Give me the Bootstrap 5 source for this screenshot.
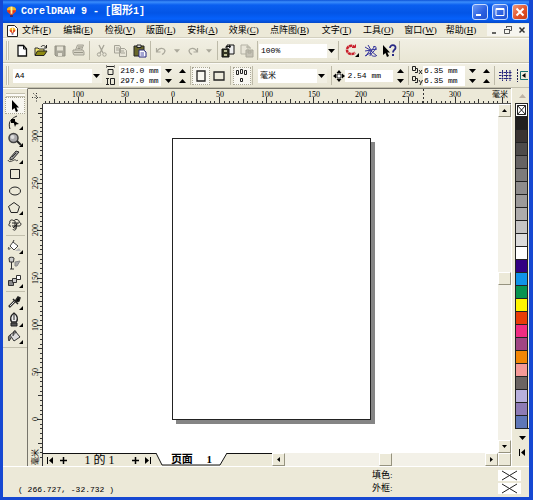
<!DOCTYPE html>
<html lang="zh-CN">
<head>
<meta charset="utf-8">
<meta name="viewport" content="width=device-width, initial-scale=1">
<title>CorelDRAW 9 - [图形1]</title>
<link href="https://cdn.jsdelivr.net/npm/bootstrap@5.3.0/dist/css/bootstrap.min.css" rel="stylesheet">
<style>
:root{--face:#ece9d8;--dark:#8d8b7d;--line:#c3c0ae;--blue:#0b4ee2}
body{font-family:"Liberation Mono","Noto Sans CJK SC",monospace;font-size:8px;line-height:12px;color:#000;background:var(--face)}
button{background:none;border:0;padding:0;color:#000;line-height:12px}
svg{display:block;flex:none}
.app{height:100vh;border:solid #1648d2;border-width:0 4px 3px 3px;background:var(--face)}
.titlebar{height:23px;margin:0 -4px 0 -3px;padding:0 5px 0 6px;color:#fff;background:linear-gradient(#0d53d8,#3b8dfb 2px,#0a5ff0 5px,#0355e6 13px,#0661fb 19px,#0448c8)}
.titlebar h1{font-size:10px;line-height:16px;font-weight:bold;margin:0 0 0 4px;white-space:pre}
.titlebar .cjk{font-size:11px}
.winbtn{width:16px;height:16px;border:1px solid #c8dcff;border-radius:3px;background:linear-gradient(135deg,#6d9bf5,#2a5fe0 60%,#2352cf)}
.winclose{background:linear-gradient(135deg,#f09a7c,#e2532a 55%,#c93c12)}
.menubar{height:15px;border-bottom:1px solid #d3d0bf}
.menus{display:grid;grid-template-columns:repeat(6,4fr) 5fr repeat(4,4fr)}
.menus a{color:#000;text-decoration:none;font:9px/15px "Liberation Serif","Noto Sans CJK SC",serif;white-space:nowrap}
.mdi{width:14px;height:12px;background:#f6f5ef}
.tbar{height:25px;border-top:1px solid #fbfaf5;border-bottom:1px solid var(--line);background:linear-gradient(#f1efe3,#e9e6d4)}
.grip{width:3px;height:19px;border:solid var(--line);border-width:0 1px;margin:0 4px 0 3px;background:#fbfaf5}
.vsep{width:1px;height:19px;background:#bdbaa8;margin:0 1px}
.gap2{margin:0 2px}
.ib{width:18px;height:18px;display:flex;align-items:center;justify-content:center;flex:none}
.wide{width:19px}
.mini{width:14px}
.pressed{background:#f8f7f1;border:1px dotted #aaa795}
.field{border:0;padding:0 2px;background:#fff;font:8px/12px "Liberation Mono","Noto Sans CJK SC",monospace;color:#000;height:12px;border-radius:0;display:block;min-width:0}
.field.tight{height:10px;line-height:10px;width:42px;padding:0 0 0 1px}
.combo{position:relative;display:block}
.combo select{appearance:none;width:100%;padding-right:14px}
.combo svg{position:absolute;right:2px;top:5px;pointer-events:none}
.combo select.field{height:14px;line-height:14px;background:linear-gradient(to left,#f1efe3 10px,#fff 10px)}
.rowh{height:10px}
.toolbox{width:25px;border-right:1px solid #77756b;border-top:1px solid #fff}
.toolbox button{width:20px;height:17px;display:flex;align-items:center;justify-content:center}
.hgrip{height:4px;width:19px;border:solid var(--line);border-width:1px 0;background:#fbfaf5}
.hsep{height:1px;width:19px;background:var(--line);margin:2px 0}
.work{border-top:1px solid #77756b}
.hruler{height:15px}
.vruler{width:15px}
.rulerlabel{font:8px "Liberation Serif","Noto Sans CJK SC",serif}
.paper{position:absolute;left:129px;top:34px;width:199px;height:282px;background:#fff;border:1px solid #222;box-shadow:4px 4px 0 #858585}
.sb{background:#f3f1e8;flex:none}
.sbbtn{width:13px;height:13px;flex:none;display:flex;align-items:center;justify-content:center;background:var(--face);border:1px solid;border-color:#fff #96937f #96937f #fff}
.vs{width:13px}
.hs{height:13px}
.pager{height:13px}
.pager .txt{font:12px/13px "Liberation Serif","Noto Sans CJK SC",serif;white-space:pre}
.edge{border-top:1px solid #111}
.tab{position:relative;width:71px;height:13px}
.tab svg{position:absolute;left:0;top:0}
.tab span{position:relative;font:bold 11px/12px "Liberation Serif","Noto Sans CJK SC",serif;white-space:pre}
.pal{width:18px;border-left:1px solid #fff;padding-left:3px}
.pal .sw{width:13px;height:13px;border:1px solid #222;border-bottom:0;display:block}
.status{height:31px;border-top:1px solid #fff}
.coords{padding:0 0 1px 15px}
.nosel{width:23px;height:11px;background:#fff}
.lab{font:9px/13px "Liberation Serif","Noto Sans CJK SC",serif}
</style>
<script src="https://cdn.jsdelivr.net/npm/bootstrap@5.3.0/dist/js/bootstrap.bundle.min.js"></script>
</head>
<body>
<svg width="0" height="0" class="position-absolute">
<symbol id="dn" viewBox="0 0 7 4"><path d="M0 0h7L3.500 4z"/></symbol>
<symbol id="up" viewBox="0 0 7 4"><path d="M0 4h7L3.500 0z"/></symbol>
<symbol id="lt" viewBox="0 0 4 7"><path d="M4 0v7L0 3.500z"/></symbol>
<symbol id="rt" viewBox="0 0 4 7"><path d="M0 0v7l4-3.500z"/></symbol>
<symbol id="balloon" viewBox="0 0 12 13"><path d="M1 4.500C1 0 11 0 11 4.500 11 7 8 8.500 7 10H5C4 8.500 1 7 1 4.500z" fill="#f4b21b"/><path d="M1 5h10C11 7.500 8 8 7 10H5C4 8 1 7.500 1 5z" fill="#df3320"/><path d="M5 1.300h2L7 9H5z" fill="#fff2a0"/><path d="M4.500 10.500h3v2h-3z" fill="#45215b"/></symbol>
<symbol id="none" viewBox="0 0 23 11"><path d="M4 1l15 9M19 1L4 10" stroke="#222" fill="none"/></symbol>
<symbol id="cnr" viewBox="0 0 4 4"><path d="M4 0v4H0z"/></symbol>
</svg>
<div class="app d-flex flex-column overflow-hidden">
 <header class="titlebar d-flex align-items-center">
  <svg width="11" height="13"><use href="#balloon"/></svg>
  <h1>CorelDRAW 9 - [<span class="cjk">图形</span>1]</h1>
  <div class="ms-auto d-flex column-gap-1">
   <button class="winbtn" aria-label="最小化"><svg width="14" height="14"><path d="M3 9h5v2H3z" fill="#fff"/></svg></button>
   <button class="winbtn" aria-label="最大化"><svg width="14" height="14"><path d="M3 3.500h8v7H3zM3 4.500h8" fill="none" stroke="#fff"/></svg></button>
   <button class="winbtn winclose" aria-label="关闭"><svg width="14" height="14"><path d="M3.500 3.500l7 7m0-7l-7 7" stroke="#fff" stroke-width="2"/></svg></button>
  </div>
 </header>
 <nav class="menubar d-flex align-items-center ps-1">
  <svg width="11" height="13"><path d="M.5 1.500h7l3 3v8H.5z" fill="#fff" stroke="#222"/><use href="#balloon" x="2" y="3" width="7" height="8"/></svg>
  <div class="menus flex-grow-1 ps-1">
   <a href="#">文件(<u>F</u>)</a><a href="#">编辑(<u>E</u>)</a><a href="#">检视(<u>V</u>)</a><a href="#">版面(<u>L</u>)</a><a href="#">安排(<u>A</u>)</a><a href="#">效果(<u>C</u>)</a><a href="#">点阵图(<u>B</u>)</a><a href="#">文字(<u>T</u>)</a><a href="#">工具(<u>O</u>)</a><a href="#">窗口(<u>W</u>)</a><a href="#">帮助(<u>H</u>)</a>
  </div>
  <button class="mdi" aria-label="最小化文档"><svg width="14" height="12"><path d="M5 9h4" stroke="#333" stroke-width="1.500"/></svg></button>
  <button class="mdi" aria-label="还原文档"><svg width="14" height="12"><path d="M5.500 4V2.500h5v4H9M3.500 5.500h5v4h-5zM5 2.500h6M3 5.500h6" fill="none" stroke="#555"/></svg></button>
  <button class="mdi" aria-label="关闭文档"><svg width="14" height="12"><path d="M4.500 3.500l5 5m0-5l-5 5" stroke="#333" stroke-width="1.500"/></svg></button>
 </nav>

 <div class="tbar d-flex align-items-center" role="toolbar">
  <i class="grip"></i>
  <button class="ib" aria-label="新建"><svg width="12" height="13"><path d="M2 1.500h5.500L10.500 5v7H2z" fill="#fff" stroke="#111" stroke-width="1.300"/><path d="M7.500 1.500V5h3" fill="none" stroke="#111"/></svg></button>
  <button class="ib wide" aria-label="打开"><svg width="14" height="13"><path d="M1 11V4h3l1 1h5v2" fill="#f5e76b" stroke="#333"/><path d="M1 11.500L3.500 7H13l-3 4.500z" fill="#8e8a12" stroke="#222"/><path d="M7 3c1-2 4-2 5 .5M12.500 1v3H10" fill="none" stroke="#222"/></svg></button>
  <button class="ib wide" aria-label="保存"><svg width="12" height="12"><path d="M1 1h10v10H2L1 10z" fill="#aaa89b" stroke="#929083"/><path d="M3 1.500h6v4H3zM4 8h4v3H4z" fill="#e6e3d5"/></svg></button>
  <button class="ib" aria-label="打印"><svg width="13" height="13"><path d="M3.500 6l2-5h6l-2 5M1 6h10l1 2v3H2L1 9z" fill="#d8d5c7" stroke="#a3a194"/><path d="M2 8.500h9M6 3h4M5.500 4.500h3" stroke="#999789"/></svg></button>
  <i class="vsep gap2"></i>
  <button class="ib wide" aria-label="剪切"><svg width="12" height="13"><path d="M3 1l4 8m1-8L4 9" stroke="#a5a397" fill="none" stroke-width="1.300"/><circle cx="3" cy="10.500" r="1.700" fill="none" stroke="#a5a397"/><circle cx="8.500" cy="10.500" r="1.700" fill="none" stroke="#a5a397"/></svg></button>
  <button class="ib wide" aria-label="复制"><svg width="13" height="12"><path d="M.5.500h5l1 1.500v6h-6zM5.500 3.500h5l2 2v6h-7z" fill="#e8e5d8" stroke="#a5a397"/><path d="M2 3h3M2 5h3M7 6h3M7 8h4" stroke="#a5a397"/></svg></button>
  <button class="ib wide" aria-label="粘贴"><svg width="14" height="14"><path d="M1 2h10v10H1z" fill="#68662a" stroke="#222"/><path d="M4 1h4v2.500H4z" fill="#ddd" stroke="#222"/><path d="M6 6h4.500L13 8v5H6z" fill="#fff" stroke="#25257c"/><path d="M7.500 9H11m-3.500 2H11" stroke="#4a4aa8"/></svg></button>
  <i class="vsep"></i>
  <button class="ib" aria-label="撤销"><svg width="12" height="10"><path d="M1.500 2v4h4M2 5.500c2-4 7-4 8-1 0 2-1 3-3 4" fill="none" stroke="#aaa89b" stroke-width="1.200"/></svg></button>
  <button class="ib mini" aria-label="撤销列表"><svg width="6" height="4" fill="#aaa89b"><use href="#dn"/></svg></button>
  <button class="ib" aria-label="重做"><svg width="12" height="10"><path d="M10.500 2v4h-4M10 5.500c-2-4-7-4-8-1 0 2 1 3 3 4" fill="none" stroke="#aaa89b" stroke-width="1.200"/></svg></button>
  <button class="ib mini" aria-label="重做列表"><svg width="6" height="4" fill="#aaa89b"><use href="#dn"/></svg></button>
  <i class="vsep"></i>
  <button class="ib" aria-label="导入"><svg width="14" height="14"><path d="M6 1h7v9H6z" fill="#eee" stroke="#111"/><path d="M1 5h7v8H1z" fill="#333522" stroke="#111"/><path d="M3 6h3v2H3zM3 10h3v2H3z" fill="#bdbf9a"/><path d="M5 4V2.500h4M8 1l2 1.500L8 4" fill="none" stroke="#111"/></svg></button>
  <button class="ib wide" aria-label="导出"><svg width="14" height="14"><path d="M1 1h7v9H1z" fill="#e8e5d8" stroke="#b3b1a4"/><path d="M6 6h7v7H6z" fill="#c5c2b5" stroke="#aaa89b"/><path d="M8 7h3v2H8zM6 3h4v2" fill="none" stroke="#aaa89b"/></svg></button>
  <i class="vsep"></i>
  <label class="combo" style="width:78px"><span class="visually-hidden">缩放级别</span><select class="field"><option>100%</option></select><svg width="7" height="4"><use href="#dn"/></svg></label>
  <i class="vsep me-1"></i>
  <button class="ib" aria-label="应用程序启动器"><svg width="16" height="15"><path d="M11 4.500C8 1 3 3 3 7s5 5.500 8 2.500" fill="none" stroke="#c91f2c" stroke-width="2.500" stroke-dasharray="3 .5"/><path d="M8 4.500h3.500V1.500" fill="none" stroke="#c91f2c"/><use href="#cnr" x="11" y="10" width="4" height="4"/></svg></button>
  <button class="ib wide" aria-label="社区"><svg width="14" height="14"><path d="M1 3l5 3-4 6m9-10L7 7l6 5M1 7l12-2M4 1l3 5-1 6M9 3c4-2 4 2 0 5s0 5 3 4M1 12l5-3" fill="none" stroke="#34349d" stroke-width="1"/></svg></button>
  <button class="ib" aria-label="这是什么"><svg width="15" height="14"><path d="M1 1v10l2.500-2L5 13l2-1-1.700-3.500H8z"/><path d="M8 4c0-4 6-3.500 5.500 0-.3 2-2.500 2-2.500 4.500" fill="none" stroke="#292985" stroke-width="1.800"/><path d="M10 10h2v2h-2z" fill="#292985"/></svg></button>
  <i class="vsep"></i>
 </div>

 <div class="tbar d-flex align-items-center" role="toolbar">
  <i class="grip"></i>
  <label class="combo" style="width:94px"><span class="visually-hidden">纸张</span><select class="field"><option>A4</option></select><svg width="7" height="4"><use href="#dn"/></svg></label>
  <svg class="mx-1" width="9" height="21" fill="none" stroke="#222"><path d="M1 1.500h7M0 0v3M9 0v3M2 4.500h5v5H2z"/><path d="M1.500 13v7M0 13.500h3M0 19.500h3M4.500 13.500h4v6h-4z"/></svg>
  <div>
   <input class="field tight" aria-label="宽度" value="210.0 mm"><input class="field tight" aria-label="高度" value="297.0 mm">
  </div>
  <div>
   <div class="rowh d-flex"><button class="ib mini rowh" aria-label="减少宽度"><svg width="7" height="4"><use href="#dn"/></svg></button><button class="ib mini rowh" aria-label="增加宽度"><svg width="7" height="4"><use href="#up"/></svg></button></div>
   <div class="rowh d-flex"><button class="ib mini rowh" aria-label="减少高度"><svg width="7" height="4"><use href="#dn"/></svg></button><button class="ib mini rowh" aria-label="增加高度"><svg width="7" height="4"><use href="#up"/></svg></button></div>
  </div>
  <i class="vsep"></i>
  <button class="ib pressed" aria-label="纵向"><svg width="10" height="12"><path d="M1 1h8v10H1z" fill="none" stroke="#222" stroke-width="1.300"/></svg></button>
  <button class="ib" aria-label="横向"><svg width="12" height="10"><path d="M1 1h10v8H1z" fill="none" stroke="#222" stroke-width="1.300"/></svg></button>
  <i class="vsep gap2"></i>
  <button class="ib pressed" aria-label="页面设置"><svg width="12" height="15" fill="none" stroke="#222"><path d="M.5 2.500h2v4h-2zM4.500 1.500h2v4h-2zM8.500 2.500h2v4h-2zM4.500 10.500h2v3h-2z"/></svg></button>
  <i class="vsep"></i>
  <label class="combo ms-1" style="width:73px"><span class="visually-hidden">单位</span><select class="field"><option>毫米</option></select><svg width="7" height="4"><use href="#dn"/></svg></label>
  <i class="vsep ms-1"></i>
  <svg width="12" height="12"><path d="M4 4h4v4H4z" fill="#fff" stroke="#222"/><path d="M6 0l2.500 3h-5zM6 12l2.500-3h-5zM0 6l3-2.500v5zM12 6L9 3.500v5z"/></svg>
  <input class="field" aria-label="微调偏移" value="2.54 mm" style="width:50px">
  <div>
   <button class="ib mini rowh" aria-label="增加偏移"><svg width="7" height="4"><use href="#up"/></svg></button><button class="ib mini rowh" aria-label="减少偏移"><svg width="7" height="4"><use href="#dn"/></svg></button>
  </div>
  <i class="vsep"></i>
  <svg width="13" height="21" fill="none" stroke="#222"><path d="M2.500 1.500h3v4h-3zM5 3.500h2.500v4H5M9 5l3 4m0-4L9 9M2.500 11.500h3v4h-3zM5 13.500h2.500v4H5M9 15l1.500 2.500M12.500 15L10 20"/></svg>
  <div>
   <input class="field tight" aria-label="再制距离 x" value="6.35 mm"><input class="field tight" aria-label="再制距离 y" value="6.35 mm">
  </div>
  <div>
   <div class="rowh d-flex"><button class="ib mini rowh" aria-label="减少 x"><svg width="7" height="4"><use href="#dn"/></svg></button><button class="ib mini rowh" aria-label="增加 x"><svg width="7" height="4"><use href="#up"/></svg></button></div>
   <div class="rowh d-flex"><button class="ib mini rowh" aria-label="减少 y"><svg width="7" height="4"><use href="#dn"/></svg></button><button class="ib mini rowh" aria-label="增加 y"><svg width="7" height="4"><use href="#up"/></svg></button></div>
  </div>
  <i class="vsep"></i>
  <button class="ib wide" aria-label="对齐网格"><svg width="13" height="13"><path d="M3.500 1v11M7.500 1v11M11 1v11M0 3.500h13M0 6.500h13M0 9.500h13" stroke="#26267c" stroke-dasharray="2 .5"/></svg></button>
  <button class="ib mini overflow-hidden" aria-label="对齐辅助线"><svg width="12" height="13"><path d="M1.500 0v13" stroke="#225" stroke-dasharray="2 1"/><path d="M4.500 2.500H12m0 8H4.500v-8" fill="none" stroke="#157070"/><path d="M9.500 4v5L6 6.500z"/></svg></button>
 </div>

 <main class="d-flex flex-grow-1 overflow-hidden">
  <aside class="toolbox d-flex flex-column align-items-center pt-1 flex-shrink-0">
   <i class="hgrip"></i>
   <button class="pressed" aria-label="挑选工具"><svg width="14" height="14"><path d="M4 1v10l2.500-2L8 13l2-1-1.700-3.500H11z"/></svg></button>
   <button aria-label="形状工具"><svg width="16" height="16"><path d="M10 1C3 4 1 8 3 14" fill="none" stroke="#222"/><path d="M4 4h4v4H4zM6 5l6 4-3 .5L8 12z"/><use href="#cnr" x="12" y="11" width="4" height="4"/></svg></button>
   <button aria-label="缩放工具"><svg width="16" height="16"><circle cx="6.500" cy="6" r="4.500" fill="#aaa9ac" stroke="#444" stroke-width="1.500"/><circle cx="5.500" cy="5" r="2" fill="#ddd"/><path d="M10 9l4 4" stroke="#222" stroke-width="2"/><use href="#cnr" x="12" y="11" width="4" height="4"/></svg></button>
   <button aria-label="手绘工具"><svg width="16" height="16"><path d="M3 9l6-7 3 1-6 7-3 1z" fill="#999" stroke="#333"/><path d="M1 11c1 3 4 1 6 0s2 2 4 0M5 8l4-4" fill="none" stroke="#333"/><use href="#cnr" x="12" y="11" width="4" height="4"/></svg></button>
   <button aria-label="矩形工具"><svg width="14" height="14"><path d="M2.500 2.500h9v9h-9z" fill="none" stroke="#222"/></svg></button>
   <button aria-label="椭圆工具"><svg width="14" height="14"><ellipse cx="7" cy="7" rx="5.500" ry="4" fill="none" stroke="#222"/></svg></button>
   <button aria-label="多边形工具"><svg width="16" height="16"><path d="M7 2.500l5.500 4-2 6H4l-2.500-6z" fill="none" stroke="#222"/><use href="#cnr" x="12" y="11" width="4" height="4"/></svg></button>
   <button aria-label="文本工具"><svg width="16" height="14" fill="none" stroke="#222"><path d="M3 5c-1-3 2-4 4-2 1-3 6-1 5 1 3 1 2 4 0 4M3 5c-2 1-1 4 1 3M5 5h7M8 3v8M5 8h7M10 5l-1 6c-1 2-3 1-3 0M6 10l4-4"/></svg></button>
   <i class="hsep"></i>
   <button aria-label="交互式填充"><svg width="16" height="16"><path d="M3 7l3-4 5 4-4 4z" fill="#fff" stroke="#444"/><path d="M6 3l1-2M2 8c-2 3 1 3 1 1" fill="none" stroke="#333"/><path d="M8 12l4-3 2 3z" fill="#bbb"/><use href="#cnr" x="12" y="11" width="4" height="4"/></svg></button>
   <button aria-label="交互式透明"><svg width="16" height="16"><path d="M2 2c0-1 5-1 5 0l-.5 4h-4zM4.500 6v7M3 13h4" fill="#ccc" stroke="#333"/><path d="M8 6l5-1-3 5H8z" fill="#aaa" stroke="#888"/></svg></button>
   <button aria-label="交互式调和"><svg width="16" height="16" stroke="#333"><path d="M1.500 7.500h5v5h-5z" fill="#888"/><path d="M5.500 5.500h4v4h-4z" fill="#ccc"/><path d="M9.500 2.500h4v4h-4z" fill="#fff"/><use href="#cnr" x="12" y="11" width="4" height="4" stroke="none"/></svg></button>
   <i class="hsep"></i>
   <button aria-label="滴管工具"><svg width="16" height="16"><path d="M2 12l6-6" stroke="#333" stroke-width="2.500"/><path d="M3 11l5-5" stroke="#ddd"/><path d="M6 4l5 5M9 5l2-3 2 1-1 3-2 1z" stroke="#222" stroke-width="1.500"/><use href="#cnr" x="12" y="11" width="4" height="4"/></svg></button>
   <button aria-label="轮廓工具"><svg width="16" height="16"><path d="M7 1c4 3 4 6 2.500 9h-5C3 7 3 4 7 1z" fill="#eee" stroke="#222" stroke-width="1.300"/><path d="M7 2v6M4 11h6v3H4z" stroke="#222" fill="#555"/><use href="#cnr" x="12" y="11" width="4" height="4"/></svg></button>
   <button aria-label="填充工具"><svg width="16" height="16"><path d="M3 6l5-4 5 6-6 4z" fill="#ddd" stroke="#333"/><path d="M6 7c0-6 3-7 3-3M4 6c-3 0-3 3-2 6l2-3" fill="#777" stroke="#333"/><use href="#cnr" x="12" y="11" width="4" height="4"/></svg></button>
   <i class="hsep w-100"></i>
  </aside>

  <section class="work d-flex flex-column flex-grow-1 overflow-hidden">
   <svg class="hruler w-100" id="hr"></svg>
   <div class="d-flex flex-grow-1 overflow-hidden">
    <svg class="vruler h-100" id="vr"></svg>
    <div class="d-flex flex-column flex-grow-1">
     <div class="d-flex flex-grow-1">
      <div class="position-relative flex-grow-1 bg-white overflow-hidden"><div class="paper"></div></div>
      <div class="sb vs d-flex flex-column">
       <button class="sbbtn" aria-label="向上滚动"><svg width="5" height="3"><use href="#up"/></svg></button>
       <i class="flex-grow-1"></i><i class="sbbtn"></i><i class="flex-grow-1"></i>
       <button class="sbbtn" aria-label="向下滚动"><svg width="5" height="3"><use href="#dn"/></svg></button>
      </div>
     </div>
     <div class="d-flex pager">
      <div class="edge d-flex align-items-center justify-content-between px-1" style="width:113px">
       <button aria-label="首页"><svg width="7" height="7"><path d="M.5 0v7" stroke="#000"/><use href="#lt" x="2" width="4" height="7"/></svg></button>
       <button aria-label="前加页"><svg width="7" height="7"><path d="M0 3.500h7M3.500 0v7" stroke="#000" stroke-width="1.500"/></svg></button>
       <span class="txt px-2"> 1 的 1 </span>
       <button aria-label="后加页"><svg width="7" height="7"><path d="M0 3.500h7M3.500 0v7" stroke="#000" stroke-width="1.500"/></svg></button>
       <button aria-label="末页"><svg width="7" height="7"><path d="M5.500 0v7" stroke="#000"/><use href="#rt" width="4" height="7"/></svg></button>
      </div>
      <button class="tab"><svg width="71" height="13"><path d="M0 0l6 12h58l7-12" fill="#fff" stroke="#111"/></svg><span>页面     1</span></button>
      <div class="edge" style="width:45px"></div>
      <div class="sb hs d-flex flex-grow-1">
       <button class="sbbtn" aria-label="向左滚动"><svg width="3" height="5"><use href="#lt"/></svg></button>
       <i class="flex-grow-1"></i><i class="sbbtn"></i><i class="flex-grow-1"></i>
       <button class="sbbtn" aria-label="向右滚动"><svg width="3" height="5"><use href="#rt"/></svg></button>
       <i class="sbbtn"></i>
      </div>
     </div>
    </div>
   </div>
  </section>

  <aside class="pal d-flex flex-column flex-shrink-0">
   <button class="ib mini" style="height:15px" aria-label="调色板上移"><svg width="7" height="4" fill="#bdb3a4"><use href="#up"/></svg></button>
   <button class="sw bg-white" aria-label="无填充"><svg width="11" height="12"><path d="M1.500 1.500h8v9h-8zM1.500 1.500l8 9m0-9l-8 9" fill="none" stroke="#222"/></svg></button>
   <div id="swatches" class="border-bottom border-dark"></div>
   <button class="ib mini rowh mt-1" aria-label="调色板下移"><svg width="7" height="4"><use href="#dn"/></svg></button>
   <button class="ib mini" aria-label="展开调色板"><svg width="7" height="7"><path d="M.5 0v7" stroke="#000"/><use href="#lt" x="2" width="4" height="7"/></svg></button>
  </aside>
 </main>

 <footer class="status d-flex">
  <span class="coords align-self-end text-nowrap">( 266.727, -32.732 )</span>
  <div class="ms-auto d-flex flex-column justify-content-center" style="width:157px">
   <div class="d-flex justify-content-between align-items-center pe-2"><span class="lab">填色:</span><svg class="nosel"><use href="#none"/></svg></div>
   <div class="d-flex justify-content-between align-items-center pe-2"><span class="lab">外框:</span><svg class="nosel"><use href="#none"/></svg></div>
  </div>
 </footer>
</div>
<script>
const colours=['#22201f','#3a3432','#4e4b4a','#666363','#7d7b7b','#8e8c8c','#9c9a9a','#adabab','#c5c4c4','#dcdcdc','#ffffff','#330082','#0f93e8','#079350','#fff500','#e93c08','#ef2c82','#a04583','#f28705','#f59a98','#6b6462','#b8b0dc','#8e7bb5','#5f77b8'];
document.getElementById('swatches').innerHTML=colours.map(c=>`<button class="sw" aria-label="${c}" style="background:${c}"></button>`).join('');
const step=47.15;
// Horizontal ruler: origin sits over the paper's left edge
(()=>{
 let s='<path d="M15 14.500H484" stroke="#555"/>';
 for(let i=-27;i<=72;i++){const x=Math.round(144+i*step/10)+.5;if(x<16||x>483)continue;
  const h=i%10===0?6:i%5===0?4:2;s+=`<path d="M${x} 14V${14-h}" stroke="#333"/>`;}
 for(let i=-2;i<=6;i++)s+=`<text class="rulerlabel" x="${Math.round(144.500+i*step)}" y="8" text-anchor="middle">${Math.abs(i*50)}</text>`;
 s+='<text class="rulerlabel" x="464" y="8">毫米</text><path d="M395.500 0v14" stroke="#333" stroke-dasharray="2 2"/><path d="M8.500 4v9M4 8.500h9M5 4l5 5" stroke="#333" stroke-dasharray="1 1.500" fill="none"/>';
 document.getElementById('hr').innerHTML=s;
})();
// Vertical ruler: origin sits at the paper's bottom edge
(()=>{
 let s='<path d="M14.500 0V363" stroke="#333"/>';
 for(let i=-8;i<=66;i++){const y=Math.round(315-i*step/10)+.5;if(y<0||y>362)continue;
  const h=i%10===0?5:i%5===0?4:2;s+=`<path d="M14 ${y}H${14-h}" stroke="#333"/>`;}
 for(let i=0;i<=6;i++)s+=`<text class="rulerlabel" text-anchor="middle" transform="translate(10 ${Math.round(315-i*step)}) rotate(-90)">${i*50}</text>`;
 s+='<text class="rulerlabel" transform="translate(10 361) rotate(-90)">毫米</text>';
 document.getElementById('vr').innerHTML=s;
})();
</script>
</body>
</html>
